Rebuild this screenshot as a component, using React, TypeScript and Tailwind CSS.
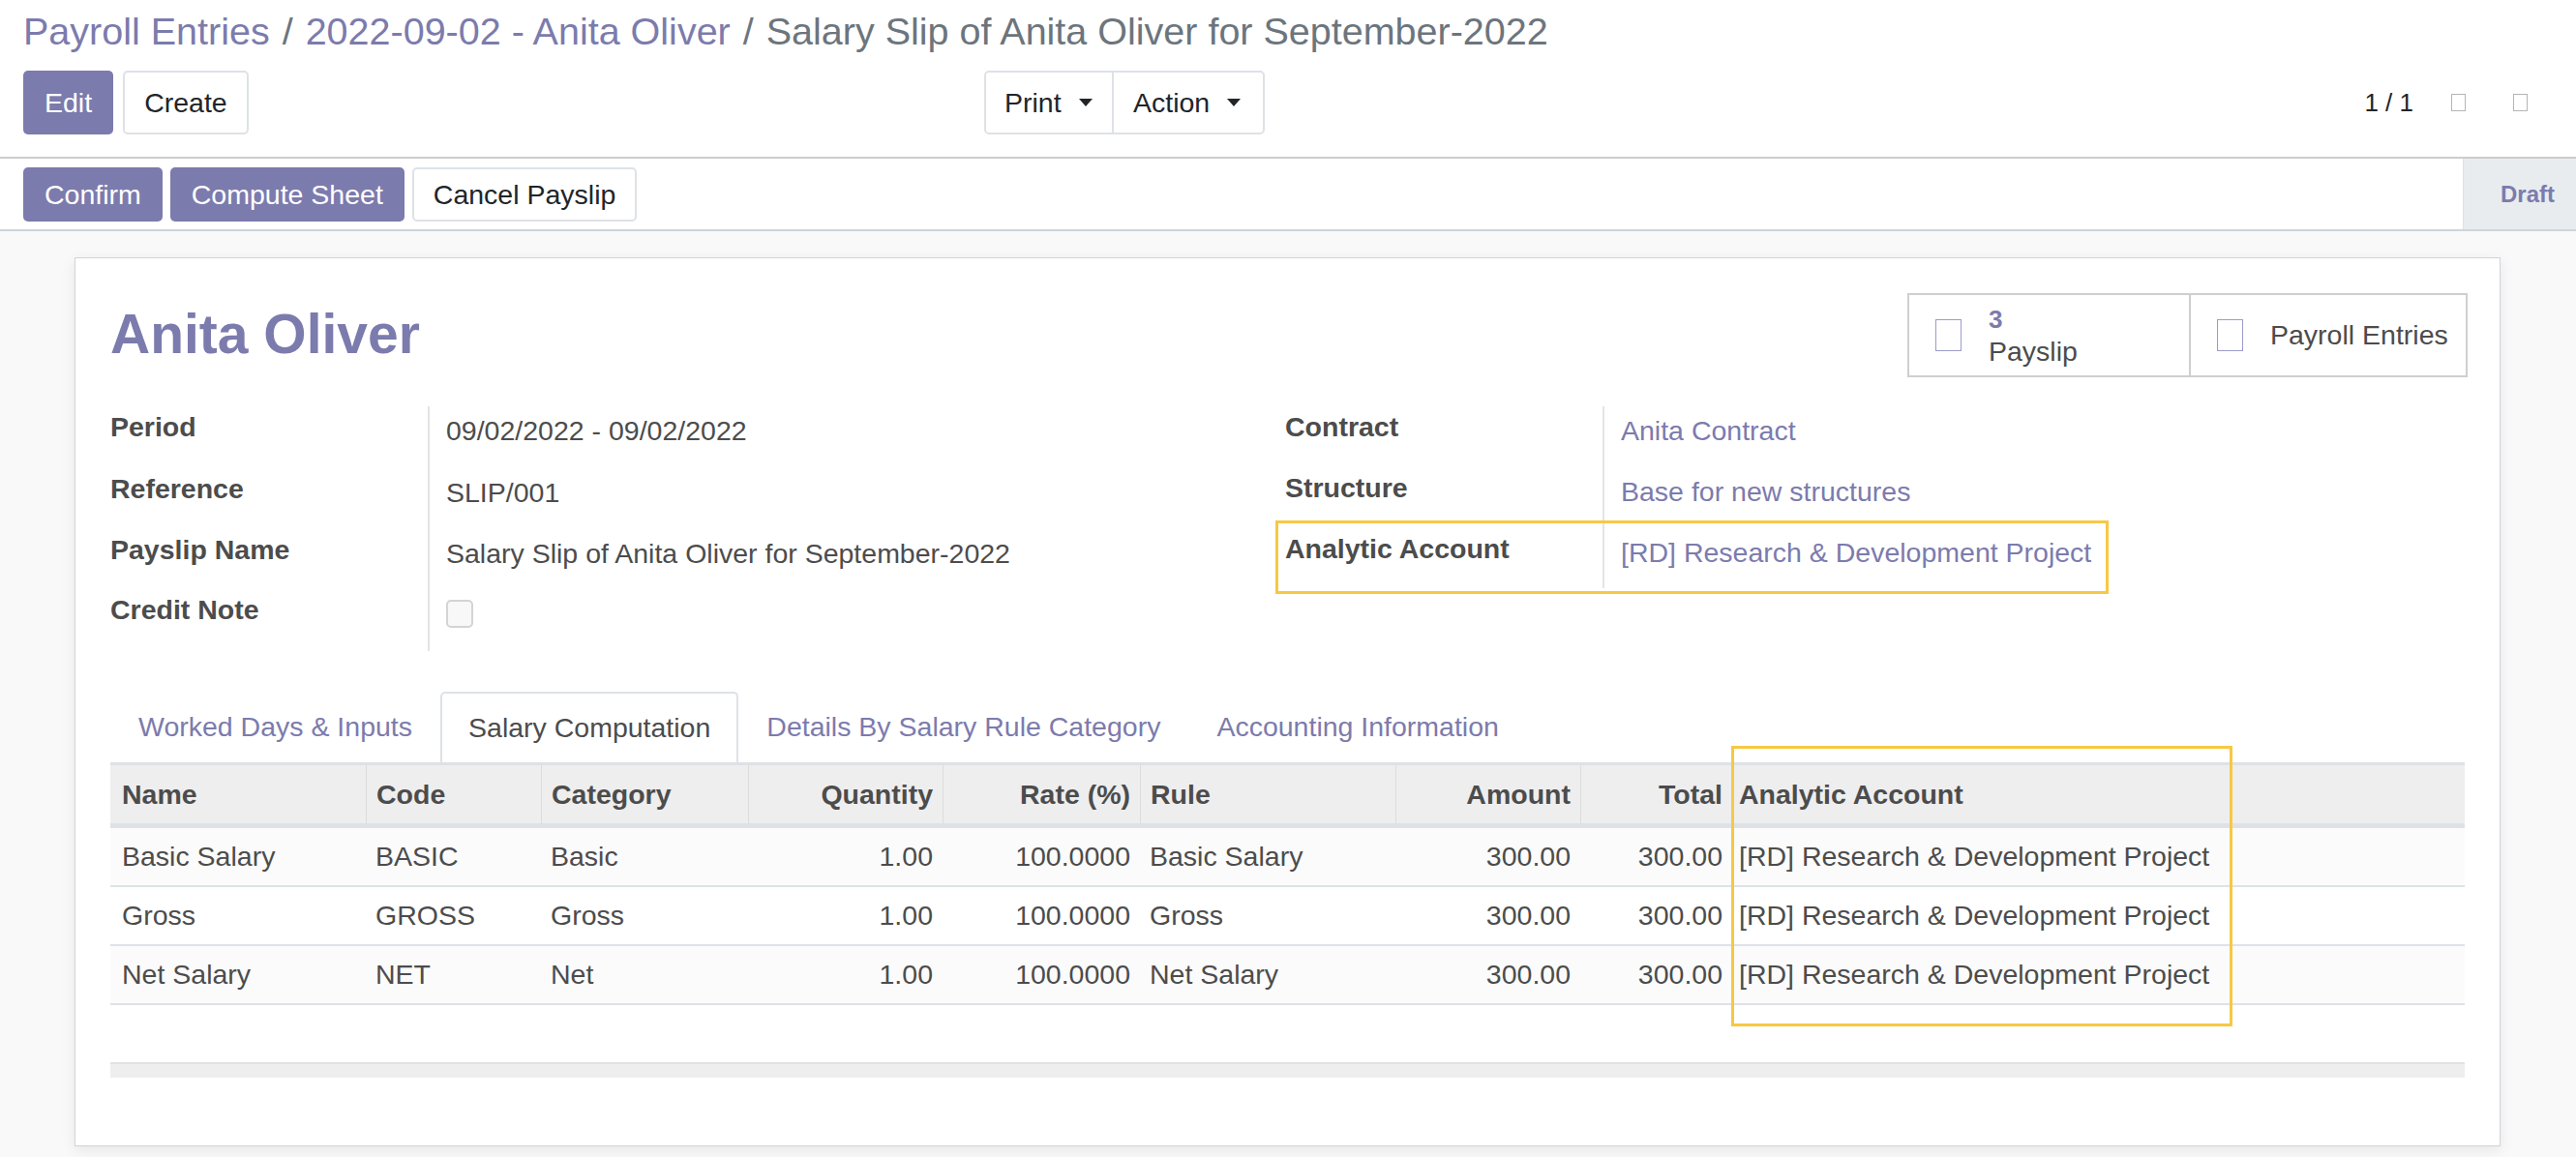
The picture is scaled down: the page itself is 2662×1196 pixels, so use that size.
import React from 'react';

const rows = [
  ['Basic Salary', 'BASIC', 'Basic', '1.00', '100.0000', 'Basic Salary', '300.00', '300.00', '[RD] Research & Development Project'],
  ['Gross', 'GROSS', 'Gross', '1.00', '100.0000', 'Gross', '300.00', '300.00', '[RD] Research & Development Project'],
  ['Net Salary', 'NET', 'Net', '1.00', '100.0000', 'Net Salary', '300.00', '300.00', '[RD] Research & Development Project'],
];

// numeric columns are right aligned
const rightCols = [3, 4, 6, 7];
const headers = ['Name', 'Code', 'Category', 'Quantity', 'Rate (%)', 'Rule', 'Amount', 'Total', 'Analytic Account'];
const gridCols = 'grid grid-cols-[264px_181px_214px_201px_204px_264px_191px_157px_1fr]';

function Caret() {
  return (
    <span className="ml-[18px] inline-block h-0 w-0 border-l-[7px] border-r-[7px] border-t-[8px] border-l-transparent border-r-transparent border-t-[#212529]" />
  );
}

function FieldRow({ label, h, children }: { label: string; h: string; children: React.ReactNode }) {
  return (
    <div className={`flex ${h}`}>
      <div className="w-[330px] shrink-0 border-r-2 border-[#e4e4e4] font-bold leading-[42px] text-[#4c4c4c]">{label}</div>
      <div className="pl-[17px] pt-[4px] leading-[42px]">{children}</div>
    </div>
  );
}

export default function App() {
  return (
    <div className="min-h-[1196px] w-full bg-[#f9f9f9] font-['Liberation_Sans',Arial,sans-serif] text-[28.5px] text-[#4c4c4c]">
      {/* Control panel */}
      <div className="h-[164px] border-b-2 border-[#cccccc] bg-white">
        <div className="flex pl-[24px] pt-[9px] text-[39.5px] leading-[46px]">
          <span className="text-[#7c7bad]">Payroll Entries</span>
          <span className="px-[13px] text-[#6c757d]">/</span>
          <span className="text-[#7c7bad]">2022-09-02 - Anita Oliver</span>
          <span className="px-[13px] text-[#6c757d]">/</span>
          <span className="text-[#6c757d]">Salary Slip of Anita Oliver for September-2022</span>
        </div>
        <div className="mt-[18px] flex items-center pl-[24px] pr-[50px]">
          <div className="flex w-[993px] gap-[10px]">
            <button className="h-[66px] rounded-[5px] bg-[#7c7bad] px-[22px] text-white">Edit</button>
            <button className="h-[66px] rounded-[5px] border-2 border-[#dee2e6] bg-white px-[20px] text-[#212529]">Create</button>
          </div>
          <div className="flex h-[66px] rounded-[5px] border-2 border-[#dee2e6] text-[#212529]">
            <button className="flex w-[132px] items-center border-r-2 border-[#dee2e6] pl-[19px]">
              Print
              <Caret />
            </button>
            <button className="flex w-[154px] items-center pl-[20px]">
              Action
              <Caret />
            </button>
          </div>
          <div className="ml-auto flex items-center text-[26px] text-[#212529]">
            <span>1 / 1</span>
            <span className="ml-[39px] inline-block h-[18px] w-[15px] border border-[#b5b5b5]" />
            <span className="ml-[49px] inline-block h-[18px] w-[15px] border border-[#b5b5b5]" />
          </div>
        </div>
      </div>

      {/* Status bar */}
      <div className="flex h-[75px] border-b-2 border-[#ced4da] bg-white">
        <div className="flex gap-[8px] pl-[24px] pt-[9px]">
          <button className="h-[56px] rounded-[5px] bg-[#7c7bad] px-[22px] text-white">Confirm</button>
          <button className="h-[56px] rounded-[5px] bg-[#7c7bad] px-[22px] text-white">Compute Sheet</button>
          <button className="h-[56px] rounded-[5px] border-2 border-[#dee2e6] bg-white px-[20px] text-[#212529]">Cancel Payslip</button>
        </div>
        <div className="ml-auto flex w-[117px] items-center border-l border-[#dee2e6] bg-[#e9ecef] pl-[38px] text-[24px] font-bold text-[#7c7bad]">
          Draft
        </div>
      </div>

      {/* Sheet */}
      <div className="pt-[27px] pb-[10px]">
        <div className="ml-[77px] w-[2507px] border border-[#d2d2dc] bg-white px-[36px] pt-[36px] pb-[70px] shadow-[0_4px_14px_rgba(0,0,0,0.08)]">
          <div className="flex items-start justify-between">
            <h1 className="mt-[8px] text-[57px] font-bold leading-[68px] text-[#7c7bad]">Anita Oliver</h1>
            <div className="mr-[-3px] flex h-[87px] w-[579px] border-2 border-[#cfcfcf]">
              <div className="flex w-[289px] items-center pl-[27px]">
                <span className="inline-block h-[33px] w-[27px] border border-[#9c9bc8]" />
                <div className="ml-[28px] flex flex-col">
                  <span className="text-[26px] font-bold leading-[33px] text-[#7c7bad]">3</span>
                  <span className="leading-[33px]">Payslip</span>
                </div>
              </div>
              <div className="flex flex-1 items-center border-l-2 border-[#cfcfcf] pl-[27px]">
                <span className="inline-block h-[33px] w-[27px] border border-[#9c9bc8]" />
                <span className="ml-[28px] leading-[33px]">Payroll Entries</span>
              </div>
            </div>
          </div>

          <div className="mt-[30px] grid grid-cols-[1214px_1fr]">
            <div>
              <FieldRow label="Period" h="h-[64px]">09/02/2022 - 09/02/2022</FieldRow>
              <FieldRow label="Reference" h="h-[63px]">SLIP/001</FieldRow>
              <FieldRow label="Payslip Name" h="h-[62px]">Salary Slip of Anita Oliver for September-2022</FieldRow>
              <FieldRow label="Credit Note" h="h-[64px]">
                <div className="mt-[7px] h-[29px] w-[28px] rounded-[5px] border-2 border-[#d4d4d4] bg-[#f8f8f8]" />
              </FieldRow>
            </div>
            <div>
              <FieldRow label="Contract" h="h-[63px]">
                <span className="text-[#7c7bad]">Anita Contract</span>
              </FieldRow>
              <FieldRow label="Structure" h="h-[63px]">
                <span className="text-[#7c7bad]">Base for new structures</span>
              </FieldRow>
              <div className="relative">
                <FieldRow label="Analytic Account" h="h-[62px]">
                  <span className="text-[#7c7bad]">[RD] Research &amp; Development Project</span>
                </FieldRow>
                <div className="absolute left-[-10px] top-[-8px] h-[76px] w-[861px] border-[3px] border-[#f7c843]" />
              </div>
            </div>
          </div>

          {/* Notebook */}
          <div className="relative mt-[42px]">
            <div className="flex h-[73px]">
              <div className="flex items-center border-2 border-transparent px-[27px] text-[#7c7bad]">Worked Days &amp; Inputs</div>
              <div className="flex items-center rounded-t-[5px] border-2 border-b-0 border-[#dee2e6] bg-white px-[27px] text-[#4c4c4c]">Salary Computation</div>
              <div className="flex items-center border-2 border-transparent px-[27px] text-[#7c7bad]">Details By Salary Rule Category</div>
              <div className="flex items-center border-2 border-transparent px-[27px] text-[#7c7bad]">Accounting Information</div>
            </div>

            <div className={`${gridCols} h-[68px] border-t-[3px] border-b-[5px] border-[#dee2e6] bg-[#eeeeee] font-bold text-[#4c4c4c]`}>
              {headers.map((h, i) => (
                <div
                  key={h}
                  className={`flex items-center whitespace-nowrap px-[10px] ${i > 0 ? 'border-l border-[#dcdcdc]' : 'pl-[12px]'} ${rightCols.includes(i) ? 'justify-end' : ''} ${i === 8 ? 'border-l-0 pl-[7px]' : ''}`}
                >
                  {h}
                </div>
              ))}
            </div>
            {rows.map((r, ri) => (
              <div key={ri} className={`${gridCols} h-[61px] border-b-2 border-[#dee2e6] ${ri % 2 === 0 ? 'bg-[#fbfbfb]' : 'bg-white'}`}>
                {r.map((c, i) => (
                  <div key={i} className={`flex items-center whitespace-nowrap px-[10px] ${i === 0 ? 'pl-[12px]' : ''} ${rightCols.includes(i) ? 'justify-end' : ''} ${i === 8 ? 'pl-[7px]' : ''}`}>
                    {c}
                  </div>
                ))}
              </div>
            ))}
            <div className="h-[59px]" />
            <div className="h-[16px] border-t-2 border-[#dee2e6] bg-[#eeeeee]" />

            <div className="absolute left-[1675px] top-[56px] h-[290px] w-[518px] border-[3px] border-[#f7c843]" />
          </div>
        </div>
      </div>
    </div>
  );
}
